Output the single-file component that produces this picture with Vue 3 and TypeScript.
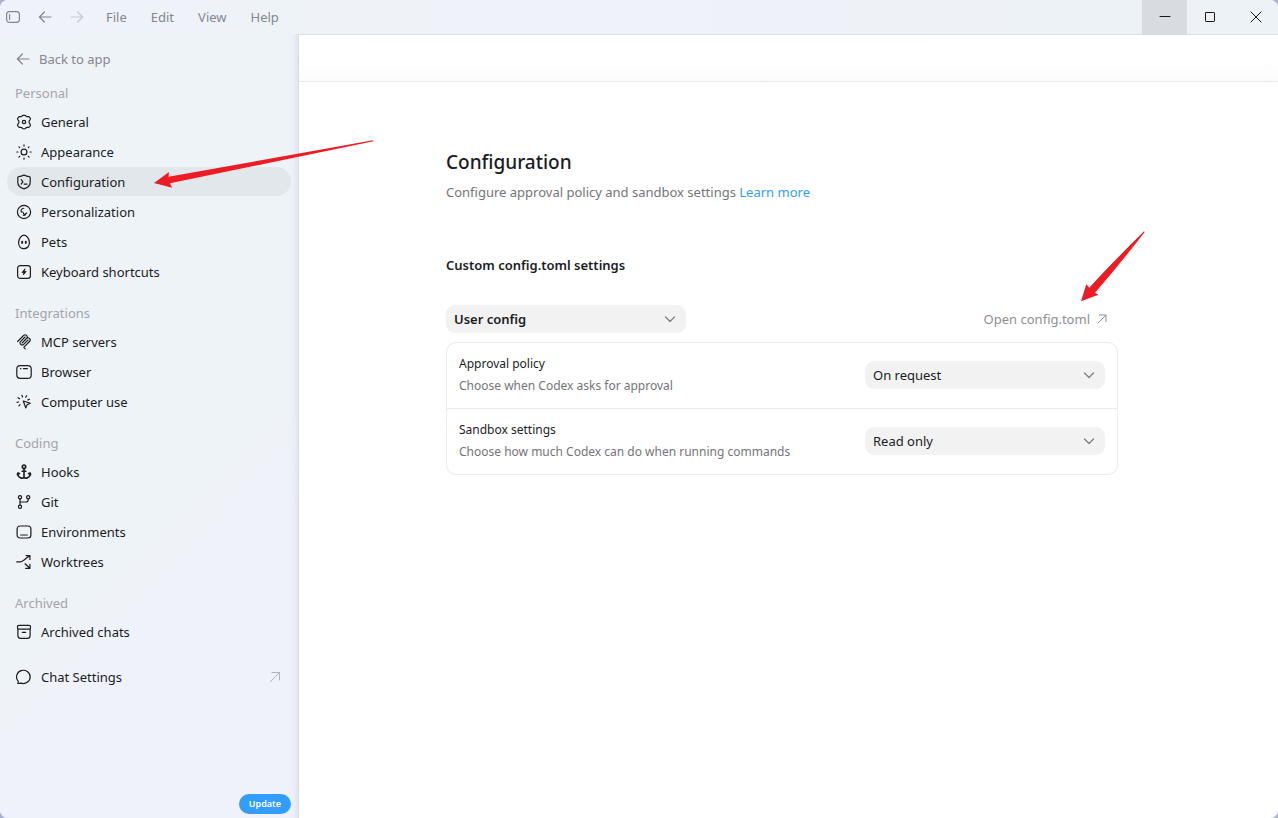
<script setup lang="ts">
import { ref } from 'vue'

interface NavItem {
  label: string
  icon: string
  active?: boolean
}
interface NavGroup {
  title: string
  items: NavItem[]
}

const menus: string[] = ['File', 'Edit', 'View', 'Help']

const icons: Record<string, string> = {
  general:
    '<path d="M6.7 1.5Q8 .7 9.3 1.5L10.2 2.3Q10.7 2.7 11.4 2.6L12.5 2.6Q13.8 2.9 14.3 4.4 14.6 5.4 13.9 6.2 13 7.1 13 8 13 8.9 13.9 9.8 14.6 10.6 14.3 11.6 13.8 13.1 12.5 13.4L11.4 13.4Q10.7 13.3 10.2 13.7L9.3 14.5Q8 15.3 6.7 14.5L5.8 13.7Q5.3 13.3 4.6 13.4L3.5 13.4Q2.2 13.1 1.7 11.6 1.4 10.6 2.1 9.8 3 8.9 3 8 3 7.1 2.1 6.2 1.4 5.4 1.7 4.4 2.2 2.9 3.5 2.6L4.6 2.6Q5.3 2.7 5.8 2.3Z"/><circle cx="8" cy="8" r="1.7"/>',
  appearance:
    '<circle cx="8" cy="8" r="2.9"/><path d="M8 .8v1.1M8 14.1v1.1M.8 8h1.1M14.1 8h1.1M2.9 2.9l.8.8M12.3 12.3l.8.8M2.9 13.1l.8-.8M12.3 3.7l.8-.8"/>',
  configuration:
    '<path d="M8 1.1c1.8 1 3.4 1.5 5.2 1.6.6 0 1 .4 1 1v4.5c0 3.4-2.7 5.6-6.2 6.6-3.5-1-6.2-3.2-6.2-6.6V3.7c0-.6.4-1 1-1C4.6 2.6 6.2 2.1 8 1.1Z"/><path d="M5.2 5.7 6.9 7.9 5.2 10.1M8.3 10.1h2.7"/>',
  personalization:
    '<circle cx="8" cy="8" r="6.6"/><path d="M7.8 4.2C5.9 4.4 4.6 6 5.2 7.9c1.5-.3 2.2.4 2.2 1.2 0 .9.7 1.4 1.5 1.1.8-.3.8-1 1.9-1.1M7.2 11.3c1 .2 1.800 0 2.400-.4" stroke-width="1.100"/>',
  pets:
    '<path d="M8 1.1c3 0 5.4 4 5.4 7.600 0 3.500-2.200 6-5.400 6s-5.400-2.500-5.400-6C2.600 5.100 5 1.100 8 1.100Z"/><path d="M6.200 7.700v1.200M9.800 7.700v1.200" stroke-width="1.900"/>',
  keyboard:
    '<rect x="1.6" y="1.6" width="12.8" height="12.8" rx="2.6"/><path d="M8.8 5 6 8.600h1.900L7.400 11 10.200 7.400H8.300Z" fill="currentColor" stroke-width=".8"/>',
  mcp:
    '<g transform="scale(.088)" stroke-width="13"><path d="M18 85 86 17c9-9 25-9 34 0s9 25 0 34l-51 51M69 101l51-50c9-9 25-9 34 0 9 9 9 25 0 34l-61 62c-3 3-3 8 0 11l12 12M103 34 53 84c-10 9-10 25 0 34 9 9 25 9 34 0l50-50"/></g>',
  browser:
    '<rect x=".8" y="1.7" width="14.4" height="12.6" rx="3.4"/><path d="M4.5 4.7h.4M7.500 4.700h3.800" stroke-width="1.3"/>',
  computer:
    '<path d="m7.3 7 6.9 2.3-3 1.500-1.500 3.100ZM6 1.400l.5 1.600M10.600 1.700 9.700 3.300M2 3.700l1.700 1M1 8.300l1.600-.3M4 10.600l-1.100 1.200M13.400 5.200l-1.500.7"/>',
  hooks:
    '<g stroke-width="1.6"><circle cx="8" cy="2.7" r="1.7"/><path d="M8 4.500v9.300M6.200 7.200h3.600M1.800 9.600c0 4.500 4.900 5.200 6.200 3.900 1.300 1.300 6.200.6 6.200-3.900M1.400 10.700l.4-1.700 1.700.6M14.600 10.700l-.4-1.700-1.700.6"/></g>',
  git:
    '<circle cx="4" cy="3.2" r="1.6"/><circle cx="4" cy="12.8" r="1.6"/><circle cx="12.2" cy="3.2" r="1.6"/><path d="M4 4.900v6.200M12.200 4.900v.9c0 1.500-.8 2.200-2.200 2.200H4"/>',
  environments:
    '<rect x="1.1" y="2" width="13.8" height="12" rx="3"/><path d="M4.700 11h6.600"/>',
  worktrees:
    '<path d="M.8 7.900h3.600c1.500 0 2-.5 3-1.500l6.100-4.600M10.100 1.600h3.800v3.800M9 9.800l4.900 4.500M13.900 10.300v4.100h-4.200"/>',
  archive:
    '<rect x="1.5" y="1.4" width="13" height="3.7" rx="1.3"/><path d="M1.900 5.300v6.100c0 1.900 1 2.900 2.900 2.900h6.400c1.900 0 2.900-1 2.900-2.900V5.300M6.300 8.400h3.400"/>',
  chat:
    '<path d="M1.700 14.400c.6-.7.7-1.400.4-2.300A6.800 6.600 0 1 1 5 14.100c-1 .4-2 .5-3.300.3Z"/>'
}

const groups: NavGroup[] = [
  {
    title: 'Personal',
    items: [
      { label: 'General', icon: 'general' },
      { label: 'Appearance', icon: 'appearance' },
      { label: 'Configuration', icon: 'configuration', active: true },
      { label: 'Personalization', icon: 'personalization' },
      { label: 'Pets', icon: 'pets' },
      { label: 'Keyboard shortcuts', icon: 'keyboard' }
    ]
  },
  {
    title: 'Integrations',
    items: [
      { label: 'MCP servers', icon: 'mcp' },
      { label: 'Browser', icon: 'browser' },
      { label: 'Computer use', icon: 'computer' }
    ]
  },
  {
    title: 'Coding',
    items: [
      { label: 'Hooks', icon: 'hooks' },
      { label: 'Git', icon: 'git' },
      { label: 'Environments', icon: 'environments' },
      { label: 'Worktrees', icon: 'worktrees' }
    ]
  },
  { title: 'Archived', items: [{ label: 'Archived chats', icon: 'archive' }] }
]

const scope = ref('User config')
const rows = ref([
  {
    id: 'approval',
    label: 'Approval policy',
    hint: 'Choose when Codex asks for approval',
    value: 'On request',
    options: ['On request', 'Never']
  },
  {
    id: 'sandbox',
    label: 'Sandbox settings',
    hint: 'Choose how much Codex can do when running commands',
    value: 'Read only',
    options: ['Read only', 'Full access']
  }
])
</script>

<template>
  <div class="window">
    <header class="titlebar">
      <button class="tool" aria-label="Toggle sidebar">
        <svg class="icon" viewBox="0 0 16 16"><rect x="1.6" y="2.6" width="12.8" height="10.8" rx="2.8" /><path d="M4.6 5.5v5" /></svg>
      </button>
      <button class="tool" aria-label="Back">
        <svg class="icon" viewBox="0 0 16 16"><path d="M14 8H2.4M7.4 3 2.4 8l5 5" /></svg>
      </button>
      <button class="tool dim" aria-label="Forward">
        <svg class="icon" viewBox="0 0 16 16"><path d="M2 8h11.6M8.6 3l5 5-5 5" /></svg>
      </button>
      <nav class="menus" aria-label="Application menu">
        <button v-for="m in menus" :key="m">{{ m }}</button>
      </nav>
      <div class="controls">
        <button class="hovered" aria-label="Minimize">
          <svg viewBox="0 0 12 12"><path d="M1 5.5h10" /></svg>
        </button>
        <button aria-label="Maximize">
          <svg viewBox="0 0 12 12"><rect x="1.5" y="1.5" width="9" height="9" rx=".6" /></svg>
        </button>
        <button aria-label="Close">
          <svg viewBox="0 0 12 12"><path d="m1 1 10 10M11 1 1 11" /></svg>
        </button>
      </div>
    </header>

    <div class="body">
      <aside class="sidebar">
        <a class="item back" href="#">
          <svg class="icon" viewBox="0 0 16 16"><path d="M13 8H1.4M6.4 3 1.4 8l5 5" /></svg>
          <span>Back to app</span>
        </a>
        <nav v-for="g in groups" :key="g.title" class="group" :aria-label="g.title">
          <h2>{{ g.title }}</h2>
          <a v-for="i in g.items" :key="i.label" class="item" :class="{ active: i.active }" href="#">
            <svg class="icon" viewBox="0 0 16 16" v-html="icons[i.icon]" />
            <span>{{ i.label }}</span>
            <svg v-if="i.active" class="pointer pointer-nav" viewBox="0 0 220 48" aria-hidden="true">
              <path d="M0 43 15 32l-.5 4.700L219 .3l.5 1L16 43.300l2 4.400Z" />
            </svg>
          </a>
        </nav>
        <a class="item chat" href="#">
          <svg class="icon" viewBox="0 0 16 16" v-html="icons.chat" />
          <span>Chat Settings</span>
          <svg class="out" viewBox="0 0 12 12"><path d="M1.5 10.500 10.500 1.500M3 1.500h7.500V9" /></svg>
        </a>
        <button class="update">Update</button>
      </aside>

      <main class="main">
        <div class="strip"></div>
        <div class="scroll">
          <div class="content">
            <h1>Configuration</h1>
            <p class="lead">Configure approval policy and sandbox settings <a href="#">Learn more</a></p>
            <h3>Custom config.toml settings</h3>
            <div class="bar">
              <div class="select strong">
                <select v-model="scope" aria-label="Config scope">
                  <option>User config</option>
                  <option>Project config</option>
                </select>
                <svg viewBox="0 0 12 12"><path d="m1.500 4 4.500 4.500L10.500 4" /></svg>
              </div>
              <a class="open" href="#">
                <span>Open config.toml</span>
                <svg class="out" viewBox="0 0 12 12"><path d="M2 10 10 2M3.500 2H10v6.500" /></svg>
                <svg class="pointer pointer-open" viewBox="0 0 66 72" aria-hidden="true">
                  <path d="M1 70.300 6.300 53.300l3 3.400Q27 37 64 .3l.7.700Q40 33 15 61.700l3.300 2Z" />
                </svg>
              </a>
            </div>
            <section class="card">
              <div v-for="r in rows" :key="r.id" class="row">
                <div class="text">
                  <label :for="r.id">{{ r.label }}</label>
                  <p>{{ r.hint }}</p>
                </div>
                <div class="select">
                  <select :id="r.id" v-model="r.value">
                    <option v-for="o in r.options" :key="o">{{ o }}</option>
                  </select>
                  <svg viewBox="0 0 12 12"><path d="m1.500 4 4.500 4.500L10.500 4" /></svg>
                </div>
              </div>
            </section>
          </div>
        </div>
      </main>
    </div>
  </div>
</template>

<style>
body {
  background: #a9b2c8;
}
</style>

<style scoped>
.window {
  display: flex;
  flex-direction: column;
  min-height: 100vh;
  border-radius: 8px;
  overflow: hidden;
  background: linear-gradient(135deg, #eff2fb 0, #eef3f8 90px, #eef3f7 500px, #eff2fb 580px);
  color: #1a1c1f;
  font: 13px/20px 'Noto Sans', 'Open Sans', sans-serif;
}
.window * {
  box-sizing: border-box;
}
button,
select {
  border: 0;
  margin: 0;
  padding: 0;
  background: none;
  color: inherit;
  font: inherit;
}
a {
  color: inherit;
  text-decoration: none;
}
h1,
h2,
h3,
p {
  margin: 0;
}
svg {
  flex: none;
  fill: none;
  stroke: currentColor;
  stroke-linecap: round;
  stroke-linejoin: round;
}
.icon {
  width: 16px;
  height: 16px;
  stroke-width: 1.2;
}

.titlebar {
  display: flex;
  align-items: center;
  height: 35px;
  padding-left: 5px;
  background: linear-gradient(90deg, #eff2fb 0, #eef3f8 280px, #eff2f9 600px, #ecf2f6 100%);
  border-bottom: 1px solid #dbdfe8;
  color: #84878c;
}
.tool {
  display: flex;
  margin-right: 16px;
}
.tool.dim {
  color: #c6cacf;
}
.menus {
  display: flex;
  gap: 24px;
  margin-left: 5px;
}
.controls {
  display: flex;
  align-self: stretch;
  margin-left: auto;
  color: #16181a;
}
.controls button {
  display: grid;
  place-items: center;
  width: 45px;
  margin-bottom: -1px;
  padding-bottom: 1px;
}
.controls button + button {
  width: 46px;
}
.controls button:last-child {
  width: 45px;
}
.controls .hovered {
  background: #d8dbe0;
}
.controls svg {
  width: 12px;
  height: 12px;
  stroke-width: 1;
}

.body {
  display: flex;
  flex: 1;
}
/* The bottom-bordered title bar continues in this colour above the sidebar. */
.sidebar {
  position: relative;
  z-index: 1;
  display: flex;
  flex-direction: column;
  flex: none;
  width: 299px;
  padding: 9px 7px 4px;
  margin-top: -1px;
  padding-top: 10px;
  background: linear-gradient(270deg, rgba(190, 196, 208, 0.28) 0, rgba(190, 196, 208, 0.06) 5px, rgba(190, 196, 208, 0) 12px), linear-gradient(135deg, #eef3f8 0, #eef3f7 460px, #eff2fb 540px);
  background-clip: padding-box;
  border-right: 1px solid #d9dce3;
}
.item {
  display: flex;
  align-items: center;
  gap: 9px;
  height: 29px;
  padding: 0 10px 0 9px;
  border-radius: 15px;
}
.item.active {
  position: relative;
  background: #e2e7eb;
}
.back {
  gap: 7px;
  margin-bottom: 6px;
  color: #84878c;
}
.group {
  display: flex;
  flex-direction: column;
  gap: 1px;
  margin-bottom: 13px;
}
.group h2 {
  margin-bottom: -1px;
  padding-left: 8px;
  color: #a2a5aa;
  font-size: 13px;
  font-weight: 400;
  line-height: 28px;
}
.chat {
  margin-top: 3px;
}
.out {
  width: 12px;
  height: 12px;
}
.chat .out {
  margin-left: auto;
  color: #b0b3b9;
}
.update {
  align-self: flex-end;
  height: 20px;
  margin-top: auto;
  padding: 0 10px;
  border-radius: 10px;
  background: #339cff;
  color: #fff;
  font-size: 9px;
  font-weight: 600;
}
.pointer {
  position: absolute;
  fill: #ed1c24;
  stroke: none;
  pointer-events: none;
}
.pointer-nav {
  left: 147px;
  top: -27px;
  width: 220px;
  height: 48px;
}

.main {
  flex: 1;
  min-width: 0;
  background: #fff;
}
.strip {
  height: 47px;
  border-bottom: 1px solid #e8e8e9;
  background: linear-gradient(#fff 50%, #fbfbfb);
}
.scroll {
  padding: 66px 33px 40px 20px;
}
.content {
  max-width: 672px;
  margin: 0 auto;
}
h1 {
  font-size: 19px;
  font-weight: 500;
  line-height: 28px;
}
.lead {
  margin-top: 6px;
  color: #747577;
}
.lead a {
  color: #339cff;
}
h3 {
  margin-top: 53px;
  font-size: 13px;
  font-weight: 600;
}
.bar {
  display: flex;
  align-items: center;
  justify-content: space-between;
  margin-top: 30px;
}
.select {
  display: grid;
  align-items: center;
  flex: none;
  width: 240px;
}
.select > * {
  grid-area: 1 / 1;
}
.select select {
  appearance: none;
  width: 100%;
  height: 28px;
  padding: 0 28px 0 8px;
  border-radius: 9px;
  background: #f2f2f2;
}
.select svg {
  justify-self: end;
  width: 12px;
  height: 12px;
  margin-right: 10px;
  color: #808184;
  stroke-width: 1.3;
  pointer-events: none;
}
.strong select {
  font-weight: 600;
}
.open {
  position: relative;
  display: flex;
  align-items: center;
  gap: 6px;
  margin-right: 10px;
  color: #8e8f91;
}
.pointer-open {
  right: -38px;
  bottom: 26px;
  width: 66px;
  height: 72px;
}
.card {
  margin-top: 9px;
  border: 1px solid #ebebeb;
  border-radius: 10px;
}
.row {
  display: flex;
  align-items: center;
  justify-content: space-between;
  gap: 16px;
  padding: 10px 12px 11px;
  font-size: 12px;
  line-height: 22px;
}
.row + .row {
  border-top: 1px solid #ebebeb;
}
.row label {
  display: block;
}
.row p {
  color: #747577;
}
.row select {
  font-size: 13px;
}
</style>
